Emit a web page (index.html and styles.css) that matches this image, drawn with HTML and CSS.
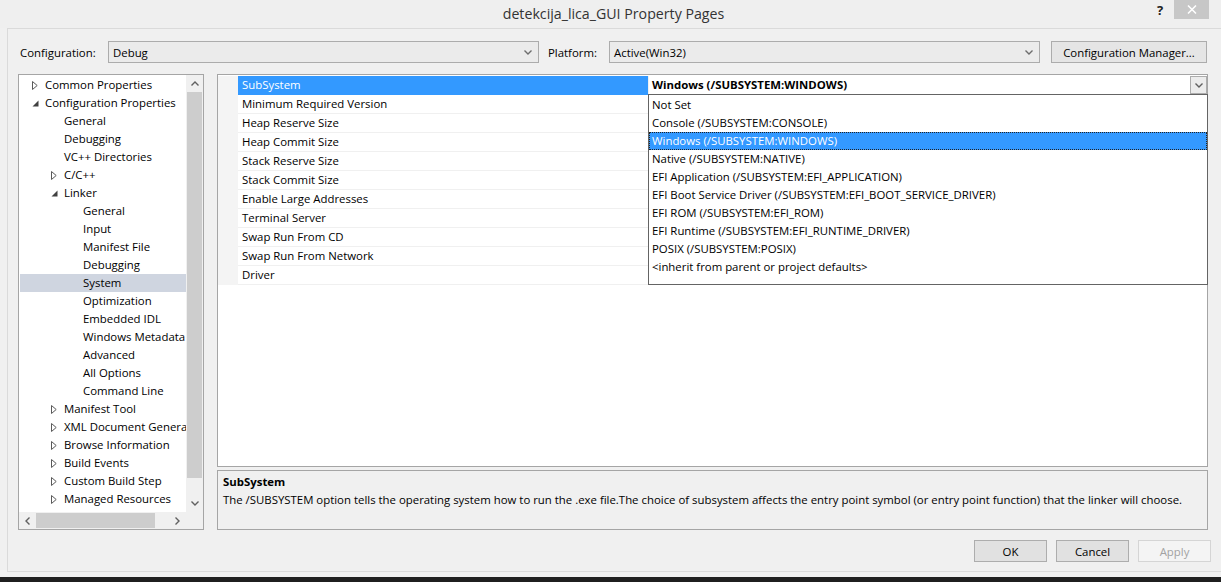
FILE: index.html
```html
<!DOCTYPE html>
<html>
<head>
<meta charset="utf-8">
<title>detekcija_lica_GUI Property Pages</title>
<link rel="stylesheet" href="styles.css">
</head>
<body>
<div class="window">
  <div class="titlebar">
    <div></div>
    <div class="title">detekcija_lica_GUI Property Pages</div>
    <div class="tb-btns">
      <span class="help">?</span>
      <span class="close"><svg width="10" height="9" viewBox="0 0 10 9"><path d="M1 0.5 L9 8.5 M9 0.5 L1 8.5" stroke="#fff" stroke-width="1.5" fill="none"/></svg></span>
    </div>
  </div>
  <div class="client">
    <div class="config-row">
      <span class="lbl">Configuration:</span>
      <div class="combo"><span>Debug</span><svg class="chev" width="8" height="5" viewBox="0 0 8 5"><path d="M0.5 0.5 L4 4 L7.5 0.5" stroke="#6d6d6d" stroke-width="1.4" fill="none"/></svg></div>
      <span class="lbl plat">Platform:</span>
      <div class="combo"><span>Active(Win32)</span><svg class="chev" width="8" height="5" viewBox="0 0 8 5"><path d="M0.5 0.5 L4 4 L7.5 0.5" stroke="#6d6d6d" stroke-width="1.4" fill="none"/></svg></div>
      <button class="btn btn-cm">Configuration Manager...</button>
    </div>

    <div class="main">
      <div class="tree">
        <div class="tree-body">
          <div class="tree-list">
            <div class="node l0"><span class="tw"><svg width="6" height="9" viewBox="0 0 6 9"><path d="M0.5 0.5 L5.2 4.5 L0.5 8.5 Z" stroke="#5a5a5a" fill="none"/></svg></span>Common Properties</div>
            <div class="node l0"><span class="tw"><svg width="7" height="7" viewBox="0 0 7 7"><path d="M6.5 0.5 L6.5 6.5 L0.5 6.5 Z" fill="#404040"/></svg></span>Configuration Properties</div>
            <div class="node l1"><span class="tw"></span>General</div>
            <div class="node l1"><span class="tw"></span>Debugging</div>
            <div class="node l1"><span class="tw"></span>VC++ Directories</div>
            <div class="node l1"><span class="tw"><svg width="6" height="9" viewBox="0 0 6 9"><path d="M0.5 0.5 L5.2 4.5 L0.5 8.5 Z" stroke="#5a5a5a" fill="none"/></svg></span>C/C++</div>
            <div class="node l1"><span class="tw"><svg width="7" height="7" viewBox="0 0 7 7"><path d="M6.5 0.5 L6.5 6.5 L0.5 6.5 Z" fill="#404040"/></svg></span>Linker</div>
            <div class="node l2"><span class="tw"></span>General</div>
            <div class="node l2"><span class="tw"></span>Input</div>
            <div class="node l2"><span class="tw"></span>Manifest File</div>
            <div class="node l2"><span class="tw"></span>Debugging</div>
            <div class="node l2 sel"><span class="tw"></span>System</div>
            <div class="node l2"><span class="tw"></span>Optimization</div>
            <div class="node l2"><span class="tw"></span>Embedded IDL</div>
            <div class="node l2"><span class="tw"></span>Windows Metadata</div>
            <div class="node l2"><span class="tw"></span>Advanced</div>
            <div class="node l2"><span class="tw"></span>All Options</div>
            <div class="node l2"><span class="tw"></span>Command Line</div>
            <div class="node l1"><span class="tw"><svg width="6" height="9" viewBox="0 0 6 9"><path d="M0.5 0.5 L5.2 4.5 L0.5 8.5 Z" stroke="#5a5a5a" fill="none"/></svg></span>Manifest Tool</div>
            <div class="node l1"><span class="tw"><svg width="6" height="9" viewBox="0 0 6 9"><path d="M0.5 0.5 L5.2 4.5 L0.5 8.5 Z" stroke="#5a5a5a" fill="none"/></svg></span>XML Document Generator</div>
            <div class="node l1"><span class="tw"><svg width="6" height="9" viewBox="0 0 6 9"><path d="M0.5 0.5 L5.2 4.5 L0.5 8.5 Z" stroke="#5a5a5a" fill="none"/></svg></span>Browse Information</div>
            <div class="node l1"><span class="tw"><svg width="6" height="9" viewBox="0 0 6 9"><path d="M0.5 0.5 L5.2 4.5 L0.5 8.5 Z" stroke="#5a5a5a" fill="none"/></svg></span>Build Events</div>
            <div class="node l1"><span class="tw"><svg width="6" height="9" viewBox="0 0 6 9"><path d="M0.5 0.5 L5.2 4.5 L0.5 8.5 Z" stroke="#5a5a5a" fill="none"/></svg></span>Custom Build Step</div>
            <div class="node l1"><span class="tw"><svg width="6" height="9" viewBox="0 0 6 9"><path d="M0.5 0.5 L5.2 4.5 L0.5 8.5 Z" stroke="#5a5a5a" fill="none"/></svg></span>Managed Resources</div>
          </div>
          <div class="vscroll">
            <div class="sarrow"><svg width="8" height="5" viewBox="0 0 8 5"><path d="M0.5 4.5 L4 1 L7.5 4.5" stroke="#606060" stroke-width="1.4" fill="none"/></svg></div>
            <div class="vtrack"><div class="vthumb"></div></div>
            <div class="sarrow"><svg width="8" height="5" viewBox="0 0 8 5"><path d="M0.5 0.5 L4 4 L7.5 0.5" stroke="#606060" stroke-width="1.4" fill="none"/></svg></div>
          </div>
        </div>
        <div class="hscroll">
          <div class="harrow"><svg width="5" height="8" viewBox="0 0 5 8"><path d="M4.5 0.5 L1 4 L4.5 7.5" stroke="#606060" stroke-width="1.4" fill="none"/></svg></div>
          <div class="htrack"><div class="hthumb"></div></div>
          <div class="harrow"><svg width="5" height="8" viewBox="0 0 5 8"><path d="M0.5 0.5 L4 4 L0.5 7.5" stroke="#606060" stroke-width="1.4" fill="none"/></svg></div>
          <div class="corner"></div>
        </div>
      </div>

      <div class="right">
        <div class="grid-panel">
          <div class="prow"><span class="gut"></span><span class="pname sel">SubSystem</span><span class="pval combo-val"><b>Windows (/SUBSYSTEM:WINDOWS)</b><span class="dd-btn"><svg width="8" height="5" viewBox="0 0 8 5"><path d="M0.5 0.5 L4 4 L7.5 0.5" stroke="#606060" stroke-width="1.4" fill="none"/></svg></span></span></div>
          <div class="prow"><span class="gut"></span><span class="pname">Minimum Required Version</span><span class="pval"></span></div>
          <div class="prow"><span class="gut"></span><span class="pname">Heap Reserve Size</span><span class="pval"></span></div>
          <div class="prow"><span class="gut"></span><span class="pname">Heap Commit Size</span><span class="pval"></span></div>
          <div class="prow"><span class="gut"></span><span class="pname">Stack Reserve Size</span><span class="pval"></span></div>
          <div class="prow"><span class="gut"></span><span class="pname">Stack Commit Size</span><span class="pval"></span></div>
          <div class="prow"><span class="gut"></span><span class="pname">Enable Large Addresses</span><span class="pval"></span></div>
          <div class="prow"><span class="gut"></span><span class="pname">Terminal Server</span><span class="pval"></span></div>
          <div class="prow"><span class="gut"></span><span class="pname">Swap Run From CD</span><span class="pval"></span></div>
          <div class="prow"><span class="gut"></span><span class="pname">Swap Run From Network</span><span class="pval"></span></div>
          <div class="prow"><span class="gut"></span><span class="pname">Driver</span><span class="pval"></span></div>

          <div class="dropdown">
            <div class="opt">Not Set</div>
            <div class="opt">Console (/SUBSYSTEM:CONSOLE)</div>
            <div class="opt hl">Windows (/SUBSYSTEM:WINDOWS)</div>
            <div class="opt">Native (/SUBSYSTEM:NATIVE)</div>
            <div class="opt">EFI Application (/SUBSYSTEM:EFI_APPLICATION)</div>
            <div class="opt">EFI Boot Service Driver (/SUBSYSTEM:EFI_BOOT_SERVICE_DRIVER)</div>
            <div class="opt">EFI ROM (/SUBSYSTEM:EFI_ROM)</div>
            <div class="opt">EFI Runtime (/SUBSYSTEM:EFI_RUNTIME_DRIVER)</div>
            <div class="opt">POSIX (/SUBSYSTEM:POSIX)</div>
            <div class="opt">&lt;inherit from parent or project defaults&gt;</div>
          </div>
        </div>
        <div class="desc">
          <div class="desc-title">SubSystem</div>
          <div class="desc-text">The /SUBSYSTEM option tells the operating system how to run the .exe file.The choice of subsystem affects the entry point symbol (or entry point function) that the linker will choose.</div>
        </div>
      </div>
    </div>

    <div class="buttons">
      <button class="btn dlg">OK</button>
      <button class="btn dlg">Cancel</button>
      <button class="btn dlg disabled">Apply</button>
    </div>
  </div>
</div>
<div class="taskbar"></div>
</body>
</html>
```

FILE: styles.css
```css
* { box-sizing: border-box; }
html, body { margin: 0; padding: 0; }
body {
  width: 1221px;
  height: 582px;
  overflow: hidden;
  background: #1f1f1f;
  font-family: "Open Sans", "Noto Sans", sans-serif;
  font-size: 11.4px;
  color: #000;
}
.window {
  height: 577px;
  background: #f0f0f0;
  display: flex;
  flex-direction: column;
}
.titlebar {
  height: 28px;
  flex: none;
  display: grid;
  grid-template-columns: 1fr auto 1fr;
  align-items: start;
  background: #efefef;
}
.title {
  font-size: 14.2px;
  color: #333;
  line-height: 28px;
  padding-left: 6px;
  white-space: nowrap;
}
.tb-btns {
  justify-self: end;
  display: flex;
  align-items: flex-start;
  margin-right: 12px;
}
.help {
  width: 28px;
  height: 19px;
  font-weight: bold;
  font-size: 13px;
  line-height: 20px;
  text-align: center;
  color: #222;
}
.close {
  width: 35px;
  height: 19px;
  background: #c7c7c7;
  display: flex;
  align-items: center;
  justify-content: center;
}
.client {
  flex: 1;
  margin-left: 7px;
  margin-bottom: 5px;
  border-top: 1px solid #dadada;
  border-left: 1px solid #dadada;
  border-bottom: 1px solid #dadada;
  padding: 12px 10px 0 0;
  display: flex;
  flex-direction: column;
}
.config-row {
  display: flex;
  align-items: center;
  height: 22px;
  padding-left: 12px;
  flex: none;
}
.lbl { width: 88px; white-space: nowrap; }
.lbl.plat { width: 61px; margin-left: 9px; }
.combo {
  width: 431px;
  height: 22px;
  border: 1px solid #acacac;
  background: #ebebeb;
  display: flex;
  align-items: center;
  justify-content: space-between;
  padding: 0 6px 0 4px;
}
.btn {
  border: 1px solid #acacac;
  background: #e5e5e5;
  font: inherit;
  color: #000;
  padding: 0;
  height: 22px;
}
.btn-cm { margin-left: 11px; width: 156px; }

.main {
  display: flex;
  margin-top: 11px;
  padding-left: 10px;
  height: 456px;
  flex: none;
}
.tree {
  width: 186px;
  height: 456px;
  border: 1px solid #a5a5a5;
  background: #fff;
  display: flex;
  flex-direction: column;
}
.tree-body {
  display: flex;
  height: 437px;
}
.tree-list {
  flex: 1;
  padding-top: 1px;
  padding-left: 1px;
  overflow: hidden;
}
.node {
  height: 18px;
  line-height: 18px;
  display: flex;
  align-items: center;
  white-space: nowrap;
}
.node.l0 { padding-left: 12px; }
.node.l1 { padding-left: 31px; }
.node.l2 { padding-left: 50px; }
.node.sel { background: #cfd5e0; }
.tw {
  width: 13px;
  flex: none;
  display: flex;
  align-items: center;
  height: 18px;
}
.vscroll {
  width: 17px;
  background: #f0f0f0;
  display: flex;
  flex-direction: column;
}
.sarrow {
  height: 17px;
  flex: none;
  display: flex;
  align-items: center;
  justify-content: center;
}
.vtrack { flex: 1; padding: 0 1px; }
.vthumb { height: 386px; background: #cdcdcd; }
.hscroll {
  height: 17px;
  display: flex;
  background: #f0f0f0;
}
.harrow {
  width: 17px;
  flex: none;
  display: flex;
  align-items: center;
  justify-content: center;
}
.htrack { flex: 1; padding: 1px 0; }
.hthumb { width: 119px; height: 100%; background: #cdcdcd; }
.corner { width: 17px; background: #f0f0f0; }

.right {
  margin-left: 13px;
  width: 991px;
  display: flex;
  flex-direction: column;
  gap: 3px;
}
.grid-panel {
  position: relative;
  height: 393px;
  border: 1px solid #a5a5a5;
  background: #fff;
  padding-top: 1px;
}
.prow {
  display: flex;
  height: 19px;
}
.gut { width: 20px; background: #f4f4f4; flex: none; }
.pname {
  width: 411px;
  flex: none;
  padding-left: 4px;
  line-height: 18px;
  border-bottom: 1px solid #f0f0f0;
  border-right: 1px solid #f0f0f0;
  white-space: nowrap;
}
.pname.sel {
  background: #3399ff;
  color: #fff;
  border-bottom-color: #3399ff;
}
.pval {
  flex: 1;
  border-bottom: 1px solid #f0f0f0;
}
.combo-val {
  display: flex;
  justify-content: space-between;
  padding-left: 3px;
  line-height: 18px;
  border-bottom: none;
}
.combo-val b { font-weight: bold; }
.dd-btn {
  width: 17px;
  height: 18px;
  border: 1px solid #acacac;
  background: #ececec;
  display: flex;
  align-items: center;
  justify-content: center;
}
.dropdown {
  position: absolute;
  left: 430px;
  top: 19px;
  width: 560px;
  height: 191px;
  border: 1px solid #646464;
  background: #fff;
  padding-top: 1px;
}
.opt {
  height: 18px;
  line-height: 18px;
  padding-left: 3px;
  white-space: nowrap;
}
.opt.hl {
  background: #3399ff;
  color: #fff;
  outline: 1px dotted #222;
  outline-offset: -1px;
}
.desc {
  height: 60px;
  border: 1px solid #a5a5a5;
  background: #f0f0f0;
  padding: 2px 5px;
}
.desc-title { font-weight: bold; line-height: 18px; }
.desc-text { line-height: 18px; white-space: nowrap; }

.buttons {
  display: flex;
  justify-content: flex-end;
  gap: 9px;
  margin-top: 10px;
}
.btn.dlg { width: 73px; background: #e1e1e1; border-color: #adadad; }
.btn.dlg.disabled { background: #f4f4f4; border-color: #d5d5d5; color: #a2a2a2; }
.taskbar { height: 5px; background: #1f1f1f; }
```
